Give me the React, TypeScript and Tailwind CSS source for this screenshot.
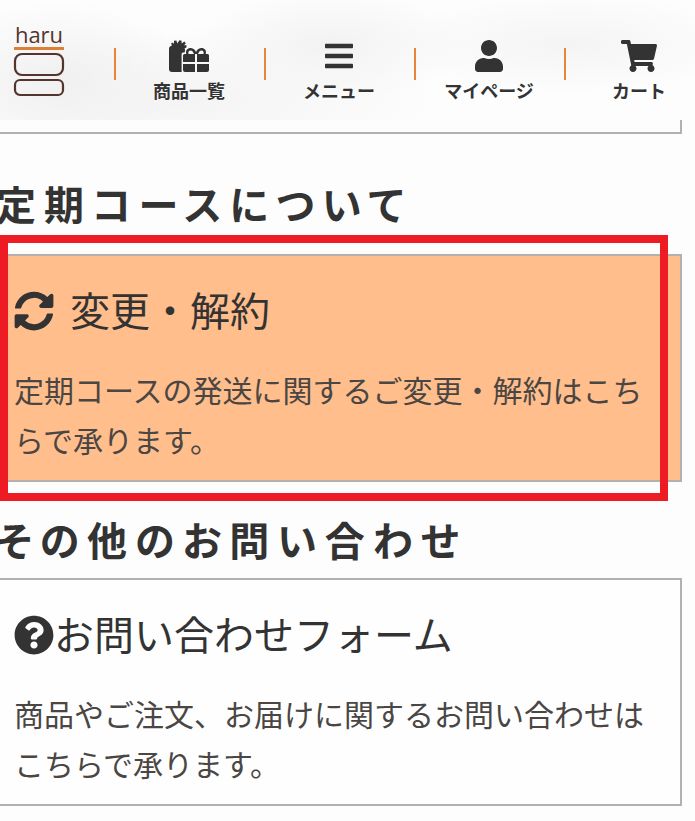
import type { ReactNode } from 'react';
import { FaBars, FaQuestionCircle, FaShoppingCart, FaSyncAlt, FaUser } from 'react-icons/fa';

interface NavItem {
  label: string;
  icon: ReactNode;
}

interface ContactCardProps {
  icon: ReactNode;
  title: string;
  text: string;
  highlighted?: boolean;
}

function Logo() {
  return (
    <svg width="50" height="72" viewBox="0 0 50 72" className="overflow-visible" role="img" aria-label="haru">
      <text x="25" y="19" textAnchor="middle" fontFamily="Open Sans, sans-serif" fontSize="22" fill="#54352c">
        haru
      </text>
      <rect y="23" width="50" height="3" fill="#dd7f34" />
      <rect x="1" y="30" width="48" height="21" rx="7" fill="none" stroke="#54352c" strokeWidth="2.2" />
      <rect x="1" y="56" width="48" height="15" rx="5" fill="none" stroke="#54352c" strokeWidth="2.2" />
    </svg>
  );
}

function ProductsIcon() {
  return (
    <svg width="40" height="32" viewBox="0 0 40 32" fill="currentColor" aria-hidden="true">
      <path d="M0 9Q0 6 3 5.5L2 3.6L3.8 2.6L5 4L5 .8L7.4 .4L8.3 3.4L10.4 .2L12.6 .8L12.6 3.6L15.4 1.6L16.8 3.2L15 5.2L17.4 5.2L17.6 7.2L15.6 8.4Q16.6 10 15.6 12.5H14Q12.6 12.5 12.6 14V32H3Q0 32 0 29Z" />
      <path
        fillRule="evenodd"
        d="M14 22V15.5Q14 14 15.5 14H17.3C16 10 19 7.8 21.8 8C24.6 8.2 26 10 27 12C28 10 29.4 8.2 32.2 8C35 7.8 38 10 36.7 14H38.5Q40 14 40 15.5V22H28V14H26V22ZM19.6 14H25C24 11.4 23 10.4 21.6 10.4C19.6 10.4 18.8 12.4 19.6 14ZM29 14H34.4C35.2 12.4 34.4 10.4 32.4 10.4C31 10.4 30 11.4 29 14ZM14 24H26V32H16Q14 32 14 30ZM28 24H40V30Q40 32 38 32H28Z"
      />
    </svg>
  );
}

const navItems: NavItem[] = [
  { label: '商品一覧', icon: <ProductsIcon /> },
  { label: 'メニュー', icon: <FaBars className="h-8 w-7" /> },
  { label: 'マイページ', icon: <FaUser className="h-8 w-7" /> },
  { label: 'カート', icon: <FaShoppingCart className="h-8 w-9" /> },
];

function Header() {
  return (
    <header className="flex h-[120px] overflow-hidden bg-[#fdfdfd] bg-[radial-gradient(130px_80px_at_60px_80px,#f0f0f0,transparent),radial-gradient(260px_75px_at_190px_100px,#f4f4f4,transparent),radial-gradient(140px_55px_at_330px_45px,#f2f2f2,transparent),radial-gradient(180px_50px_at_570px_44px,#f4f4f4,transparent)]">
      <a href="#" className="w-[114px] shrink-0 pt-6 pl-[14px]">
        <Logo />
      </a>
      <nav>
        <ul className="flex">
          {navItems.map((item) => (
            <li key={item.label} className="flex w-[150px] shrink-0">
              <span className="mt-12 h-8 w-[2px] bg-[#e9843a]" />
              <a href="#" className="flex flex-1 flex-col items-center gap-[6px] pt-10 pr-[2px]">
                {item.icon}
                <span className="text-[18px] leading-6 font-bold">{item.label}</span>
              </a>
            </li>
          ))}
        </ul>
      </nav>
    </header>
  );
}

function SectionTitle({ children }: { children: ReactNode }) {
  return (
    <h2 className="-ml-1 text-[40px] leading-[62px] font-bold tracking-[8px] [font-feature-settings:'palt']">
      {children}
    </h2>
  );
}

function ContactCard({ icon, title, text, highlighted }: ContactCardProps) {
  return (
    <div className="relative">
      <a
        href="#"
        className={`mr-[13px] block border-2 border-l-0 border-[#b3b0ae] px-[14px] pt-[14px] pb-4 ${
          highlighted ? 'bg-[#ffbe8c]' : 'bg-[#fefefe]'
        }`}
      >
        <h3 className={`flex items-center text-[40px] leading-[78px] ${highlighted ? 'gap-4' : ''}`}>
          {icon}
          {title}
        </h3>
        <p className="mt-4 text-[30px] leading-[50px] text-[#4a4644]">{text}</p>
      </a>
      {highlighted && (
        <div className="pointer-events-none absolute -top-[19px] right-[27px] -bottom-[19px] left-0 border-8 border-[#ed1c24]" />
      )}
    </div>
  );
}

export default function App() {
  return (
    <div className="min-h-screen overflow-x-hidden bg-[#fdfdfd] font-['Noto_Sans_CJK_JP',sans-serif] text-[#333]">
      <Header />
      <main className="pb-4">
        <div className="mr-[13px] h-[14px] border-r-2 border-b-2 border-[#b3b0ae]" />
        <section className="pt-[38px]">
          <SectionTitle>定期コースについて</SectionTitle>
          <div className="mt-5">
            <ContactCard
              icon={<FaSyncAlt className="mt-1 size-10 shrink-0" />}
              title="変更・解約"
              text="定期コースの発送に関するご変更・解約はこちらで承ります。"
              highlighted
            />
          </div>
        </section>
        <section className="pt-[26px]">
          <SectionTitle>その他のお問い合わせ</SectionTitle>
          <div className="mt-2">
            <ContactCard
              icon={<FaQuestionCircle className="mt-1 size-10 shrink-0" />}
              title="お問い合わせフォーム"
              text="商品やご注文、お届けに関するお問い合わせはこちらで承ります。"
            />
          </div>
        </section>
      </main>
    </div>
  );
}
